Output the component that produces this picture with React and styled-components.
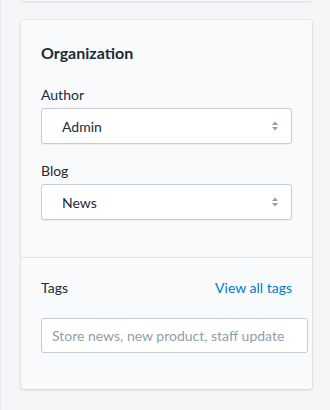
import React from 'react'
import styled, { createGlobalStyle } from 'styled-components'

const GlobalStyle = createGlobalStyle`
    html, body {
        margin: 0;
        padding: 0;
        background: #f4f6f8;
    }
    body {
        font-family: Lato, "Open Sans", sans-serif;
        color: #212b36;
    }
`

const Page = styled.div`
    width: 330px;
    height: 410px;
    box-sizing: border-box;
    padding: 0 18px 0 20px;
    border-left: 1px solid #e9ecef;
    display: flex;
    flex-direction: column;
    gap: 19px;
    overflow: hidden;
`

const Card = styled.div`
    background: #f9fafb;
    border-radius: 3px;
    box-shadow: 0 0 0 1px rgba(63, 63, 68, 0.05), 0 1px 3px 0 rgba(63, 63, 68, 0.15);
    height: ${p => (p.$stub ? '1px' : 'auto')};
    border-top-left-radius: ${p => (p.$stub ? '0' : '3px')};
    border-top-right-radius: ${p => (p.$stub ? '0' : '3px')};
`

const Section = styled.div`
    padding: 20px 20px 20px;
    & + & {
        border-top: 1px solid #dfe3e8;
    }
`

const Heading = styled.h2`
    margin: 1px 0 20px;
    font-size: 16px;
    line-height: 24px;
    font-weight: 700;
    color: #212b36;
`

const Field = styled.div`
    margin-bottom: 17px;
`

const Label = styled.div`
    font-size: 14px;
    line-height: 20px;
    color: #212b36;
    margin-bottom: 3px;
`

const LabelRow = styled.div`
    display: flex;
    justify-content: space-between;
    align-items: center;
    font-size: 14px;
    line-height: 20px;
    margin-bottom: 20px;
`

const Link = styled.a`
    color: #007ace;
    text-decoration: none;
    cursor: pointer;
`

const Select = styled.div`
    position: relative;
    height: 36px;
    box-sizing: border-box;
    display: flex;
    align-items: center;
    padding: 0 32px 0 20px;
    background: #fff;
    border: 1px solid #c4cdd5;
    border-radius: 3px;
    box-shadow: 0 1px 0 0 rgba(22, 29, 37, 0.05);
    font-size: 14px;
    color: #212b36;
`

const Arrows = styled.svg`
    position: absolute;
    right: 11px;
    top: 50%;
    transform: translateY(-50%);
`

const TagInput = styled.input`
    width: calc(100% + 16px);
    height: 35px;
    box-sizing: border-box;
    padding: 0 10px;
    border: 1px solid #c4cdd5;
    border-radius: 3px;
    background: #fff;
    font-family: inherit;
    font-size: 14px;
    color: #212b36;
    margin-bottom: 16px;
    &::placeholder {
        color: #919eab;
    }
`

const SelectArrows = () => (
    <Arrows width="10" height="14" viewBox="0 0 10 14">
        <path d="M5 2.5 L8 6 H2 Z" fill="#919eab" />
        <path d="M5 11.5 L8 8 H2 Z" fill="#919eab" />
    </Arrows>
)

const App = () => {
    return (
        <>
            <GlobalStyle />
            <Page>
                <Card $stub />
                <Card>
                    <Section>
                        <Heading>Organization</Heading>
                        <Field>
                            <Label>Author</Label>
                            <Select>
                                Admin
                                <SelectArrows />
                            </Select>
                        </Field>
                        <Field>
                            <Label>Blog</Label>
                            <Select>
                                News
                                <SelectArrows />
                            </Select>
                        </Field>
                    </Section>
                    <Section>
                        <LabelRow>
                            <span>Tags</span>
                            <Link>View all tags</Link>
                        </LabelRow>
                        <TagInput placeholder="Store news, new product, staff update" />
                    </Section>
                </Card>
            </Page>
        </>
    )
}

export default App
